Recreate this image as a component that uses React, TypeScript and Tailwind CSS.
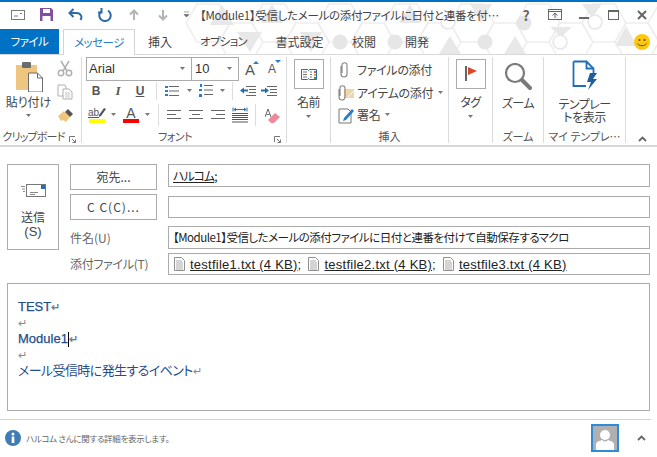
import type { ReactNode } from "react";

function Svg({ w, h, children, className = "" }: { w: number; h: number; children: ReactNode; className?: string }) {
  return (
    <svg width={w} height={h} viewBox={`0 0 ${w} ${h}`} className={`block shrink-0 ${className}`} fill="none">
      {children}
    </svg>
  );
}

function Caret({ className = "" }: { className?: string }) {
  return (
    <Svg w={7} h={4} className={className}>
      <path d="M1 0h5L3.500 3z" fill="#777" />
    </Svg>
  );
}

function TitlePattern() {
  const hexes = Array.from({ length: 15 }, (_, i) => {
    const cx = 208 + i * 33;
    const cy = i % 2 ? 40 : 21;
    return `M${cx - 22} ${cy}L${cx - 11} ${cy - 19}H${cx + 11}L${cx + 22} ${cy}L${cx + 11} ${cy + 19}H${cx - 11}Z`;
  });
  const tris = [
    "M222 3l12 20h-24z", "M237 30h25l-12 20z", "M272 2l11 19h-22z", "M300 30h22l-11 20z", "M410 2l11 19h-22z",
    "M470 2h22l-11 19z", "M550 25h22l-11 10z", "M582 2h20l-10 14z", "M626 24l11 20h-22z", "M515 34l11 18h-22z", "M450 34l11 18h-22z",
  ];
  const dots = [[340, 40], [485, 40], [524, 21], [395, 40]];
  const rings = [[560, 40], [595, 20], [448, 20]];
  return (
    <svg width={657} height={52} viewBox="0 0 657 52" className="absolute left-0 top-[2px]" fill="none">
      {hexes.map((d) => (
        <path key={d} d={d} stroke="#eeeeee" strokeWidth={1.5} />
      ))}
      {tris.map((d) => (
        <path key={d} d={d} fill="#e8e8e8" />
      ))}
      {dots.map(([x, y]) => (
        <circle key={x} cx={x} cy={y} r={7.500} fill="#e6e6e6" />
      ))}
      {rings.map(([x, y]) => (
        <circle key={x} cx={x} cy={y} r={7} fill="#fff" stroke="#e6e6e6" strokeWidth={1.5} />
      ))}
    </svg>
  );
}

function TitleBar() {
  return (
    <div className="relative flex h-[27px] items-center">
      <div className="flex w-[200px] items-center pb-[2px]">
        <Svg w={16} h={12} className="ml-[10px]">
          <rect x={1.500} y={1.500} width={13} height={9} stroke="#7a7a7a" />
          <path d="M4 7h4M10 4.500h2" stroke="#7a7a7a" />
        </Svg>
        <Svg w={15} h={15} className="ml-[13px]">
          <path d="M1 1h11l2 2v11H1z" fill="#80509e" />
          <rect x={4} y={2} width={7} height={4} fill="#fff" />
          <rect x={3.500} y={9} width={8} height={5} fill="#fff" />
        </Svg>
        <Svg w={15} h={13} className="ml-[14px]">
          <path d="M12.500 12c2-3 .5-7-4-7H2M5.500 1L1.500 5l4 4" stroke="#2b6ca8" strokeWidth={2} />
        </Svg>
        <Svg w={14} h={14} className="ml-[15px]">
          <path d="M4 2.500a5.700 5.700 0 1 0 6 0M3.500 0v4.500H0" stroke="#2b6ca8" strokeWidth={2} />
        </Svg>
        <Svg w={10} h={12} className="ml-[17px]">
          <path d="M5 11V2M1 5.500L5 1.500l4 4" stroke="#b4b4b4" strokeWidth={2} />
        </Svg>
        <Svg w={10} h={12} className="ml-[19px]">
          <path d="M5 1v9M1 6.500l4 4 4-4" stroke="#b4b4b4" strokeWidth={2} />
        </Svg>
        <Svg w={7} h={7} className="ml-[15px]">
          <path d="M1 1h5M1 3.500h5L3.500 6z" fill="#666" stroke="#666" strokeWidth={0.6} />
        </Svg>
      </div>
      <span className="relative w-[320px] whitespace-nowrap text-[11.5px] leading-none tracking-[-0.3px] text-[#444]">
        【Module1】受信したメールの添付ファイルに日付と連番を付…
      </span>
      <div className="relative flex items-center pb-[2px]">
        <span className="w-[12px] text-center text-[14px] font-bold leading-none text-[#666]">?</span>
        <Svg w={14} h={11} className="ml-[16px]">
          <rect x={0.500} y={0.500} width={13} height={10} stroke="#666" />
          <path d="M0 2.500h14M7 9V4.500M4.500 6.500L7 4l2.500 2.500" stroke="#666" />
        </Svg>
        <Svg w={10} h={2} className="ml-[17px] mt-[6px]">
          <rect width={10} height={2} fill="#666" />
        </Svg>
        <Svg w={11} h={10} className="ml-[19px]">
          <rect x={0.500} y={0.500} width={10} height={9} stroke="#666" />
          <rect width={11} height={2} fill="#666" />
        </Svg>
        <Svg w={10} h={10} className="ml-[18px]">
          <path d="M1 1l8 8M9 1l-8 8" stroke="#666" strokeWidth={2} />
        </Svg>
      </div>
    </div>
  );
}

function Tabs() {
  const tabs = [
    { label: "挿入", w: "w-[50px]", type: "text-[12px]" },
    { label: "オプション", w: "w-[77px]", type: "text-[11.5px] tracking-[-0.7px]" },
    { label: "書式設定", w: "w-[75px]", type: "text-[12px]" },
    { label: "校閲", w: "w-[54px]", type: "text-[12px]" },
    { label: "開発", w: "w-[52px]", type: "text-[12px]" },
  ];
  return (
    <div className="relative flex h-[25px] items-stretch">
      <div className="flex w-[59px] items-center justify-center bg-[#0072c6] text-[11.5px] tracking-[-0.5px] text-white">ファイル</div>
      <div className="relative z-10 -mb-px ml-[4px] flex w-[72px] items-center justify-center border border-b-0 border-[#d4d4d4] bg-white text-[11.5px] tracking-[-0.5px] text-[#2b7cc4]">
        メッセージ
      </div>
      {tabs.map((t) => (
        <div key={t.label} className={`flex ${t.w} ${t.type} items-center justify-center text-[#444]`}>
          {t.label}
        </div>
      ))}
      <div className="ml-auto mr-[7px] flex items-center">
        <Svg w={16} h={16}>
          <circle cx={8} cy={8} r={8} fill="#fcc70f" />
          <circle cx={5.500} cy={6} r={1} fill="#5a4a10" />
          <circle cx={10.500} cy={6} r={1} fill="#5a4a10" />
          <path d="M3.500 9.500c1.500 3 7.500 3 9 0" stroke="#5a4a10" />
        </Svg>
      </div>
    </div>
  );
}

function Group({ w, label, children, launcher, labelClass = "" }: { w: string; label?: string; children: ReactNode; launcher?: boolean; labelClass?: string }) {
  return (
    <div className={`my-[2px] flex ${w} shrink-0 flex-col border-r border-[#dcdcdc]`}>
      <div className="h-[75px]">{children}</div>
      <div className={`relative flex h-[14px] items-center justify-center whitespace-nowrap text-[11px] leading-none text-[#555] ${labelClass}`}>
        {label}
        {launcher && (
          <Svg w={7} h={7} className="absolute bottom-0 right-[5px]">
            <path d="M.5 6V.5H6M3 3l3.500 3.500M6.500 3.500v3h-3" stroke="#777" />
          </Svg>
        )}
      </div>
    </div>
  );
}

function VSep({ h = "h-[18px]", mx = "mx-[6px]" }: { h?: string; mx?: string }) {
  return <div className={`${h} ${mx} w-px shrink-0 bg-[#dcdcdc]`} />;
}

function Clipboard() {
  return (
    <Group w="w-[82px]" label="クリップボード" launcher labelClass="pr-[14px] tracking-[-0.8px]">
      <div className="flex">
        <div className="flex w-[57px] flex-col items-center pt-[5px]">
          <Svg w={30} h={30}>
            <path d="M2 3h21v25H2z" fill="#eec67f" />
            <rect x={8} y={0} width={9} height={6} rx={1} fill="#6c6c6c" />
            <path d="M14.500 11h9l5 5v14h-14z" fill="#fff" stroke="#6c6c6c" />
            <path d="M23.500 11v5h5" stroke="#6c6c6c" />
          </Svg>
          <span className="mt-[3px] whitespace-nowrap text-[12px] leading-[14px] text-[#444]">貼り付け</span>
          <Caret className="mt-[5px]" />
        </div>
        <div className="flex flex-col gap-[7px] pt-[3px]">
          <Svg w={16} h={17}>
            <path d="M4 1l6 10M12 1L6 11" stroke="#b0b0b0" strokeWidth={1.500} />
            <circle cx={4} cy={13} r={2.700} stroke="#b0b0b0" strokeWidth={1.500} />
            <circle cx={12} cy={13} r={2.700} stroke="#b0b0b0" strokeWidth={1.500} />
          </Svg>
          <Svg w={16} h={16}>
            <path d="M1 1h7l1 2v9H1z" fill="#fff" stroke="#b0b0b0" />
            <path d="M6 5h6l3 3v7H6z" fill="#fff" stroke="#b0b0b0" />
            <path d="M8 9h5M8 11h5M8 13h5" stroke="#c4c4c4" />
          </Svg>
          <Svg w={17} h={16}>
            <path d="M1 9l6-5 6 6-4 5-3-2-2 1z" fill="#eec67f" />
            <path d="M8 5l5 5 3-3-5-5z" fill="#555" />
          </Svg>
        </div>
      </div>
    </Group>
  );
}

function IconRow({ children, className = "" }: { children: ReactNode; className?: string }) {
  return <div className={`flex items-center ${className}`}>{children}</div>;
}

function Font() {
  return (
    <Group w="w-[205px]" label="フォント" launcher labelClass="pr-[18px] tracking-[-0.5px]">
      <div className="flex flex-col pl-[4px] pt-0">
        <IconRow>
          <div className="flex h-[24px] w-[106px] items-center justify-between border border-[#ababab] pl-[2px] pr-[5px] font-['Liberation_Sans'] text-[13px] text-[#333]">
            Arial
            <Caret />
          </div>
          <div className="-ml-px flex h-[24px] w-[48px] items-center justify-between border border-[#ababab] pl-[3px] pr-[5px] font-['Liberation_Sans'] text-[13px] text-[#333]">
            10
            <Caret />
          </div>
          <span className="relative ml-px w-[20px] text-center font-['Liberation_Sans'] text-[15px] leading-none text-[#555]">
            A
            <Svg w={6} h={3} className="absolute right-[1px] top-[-1px]">
              <path d="M0 3l3-3 3 3z" fill="#2b7cc4" />
            </Svg>
          </span>
          <span className="relative w-[24px] text-center font-['Liberation_Sans'] text-[12px] leading-none text-[#555]">
            A
            <Svg w={6} h={3} className="absolute right-[3px] top-[-3px]">
              <path d="M0 0l3 3 3-3z" fill="#2b7cc4" />
            </Svg>
          </span>
        </IconRow>
        <IconRow className="h-[19px]">
          <span className="w-[20px] text-center font-['Liberation_Sans'] text-[12px] font-bold text-[#555]">B</span>
          <span className="w-[24px] text-center font-['Liberation_Serif'] text-[13px] font-bold italic text-[#555]">I</span>
          <span className="w-[20px] text-center font-['Liberation_Sans'] text-[12px] font-bold text-[#555] underline">U</span>
          <VSep h="h-[18px]" mx="ml-[6px] mr-[8px]" />
          <Svg w={14} h={12}>
            <path d="M4 1.500h10M4 6h10M4 10.500h10" stroke="#666" />
            <path d="M0 1h3v2H0zM0 5h3v2H0zM0 9h3v2H0z" fill="#2b7cc4" />
          </Svg>
          <Caret className="ml-[7px]" />
          <Svg w={14} h={13} className="ml-[6px]">
            <path d="M5 1.500h9M5 6h9M5 10.500h9" stroke="#666" />
            <path d="M1 0h2v3H1zM0 5h3v2H0zM0 10h3v3H0z" fill="#2b7cc4" />
          </Svg>
          <Caret className="ml-[6px]" />
          <VSep h="h-[18px]" mx="ml-[6px] mr-[7px]" />
          <Svg w={16} h={11}>
            <path d="M6 1.500h10M9 4.500h7M9 7.500h7M6 10.500h10" stroke="#666" />
            <path d="M0 5.500l4-3v2h4v2H4v2z" fill="#2b6ca8" />
          </Svg>
          <Svg w={16} h={11} className="ml-[5px]">
            <path d="M6 1.500h10M9 4.500h7M9 7.500h7M6 10.500h10" stroke="#666" />
            <path d="M8 5.500l-4-3v2H0v2h4v2z" fill="#2b6ca8" />
          </Svg>
        </IconRow>
        <IconRow className="mt-[4px] h-[22px]">
          <div className="ml-[3px] flex w-[16px] flex-col items-center">
            <div className="flex h-[12px] items-center">
              <span className="font-['Liberation_Sans'] text-[10px] leading-none text-[#555] underline">ab</span>
              <Svg w={7} h={11} className="-mt-[2px]">
                <path d="M0 8l5-7 2 1-5 7-2 1z" fill="#555" />
              </Svg>
            </div>
            <div className="h-[4px] w-[16px] bg-[#ffff00]" />
          </div>
          <Caret className="ml-[5px]" />
          <div className="ml-[6px] flex w-[16px] flex-col items-center">
            <span className="font-['Liberation_Sans'] text-[14px] leading-[12px] text-[#555]">A</span>
            <div className="h-[4px] w-[16px] bg-[#ff0000]" />
          </div>
          <Caret className="ml-[5px]" />
          <VSep h="h-[22px]" mx="ml-[7px] mr-[8px]" />
          <Svg w={14} h={12}>
            <path d="M0 1.500h14M0 5.500h9M0 9.500h14" stroke="#666" />
          </Svg>
          <Svg w={14} h={12} className="ml-[8px]">
            <path d="M0 1.500h14M3 5.500h8M0 9.500h14" stroke="#666" />
          </Svg>
          <Svg w={14} h={12} className="ml-[8px]">
            <path d="M0 1.500h14M5 5.500h9M0 9.500h14" stroke="#666" />
          </Svg>
          <Svg w={16} h={16} className="ml-[7px]">
            <path d="M1 .5v4M15 .5v4M2 2.500h12M4 1L2 2.500 4 4M12 1l2 1.500L12 4" stroke="#2b6ca8" />
            <path d="M0 6.500h16M0 8.500h16M0 10.500h16M0 12.500h16M0 15h16" stroke="#555" />
          </Svg>
          <VSep h="h-[22px]" mx="ml-[7px] mr-[9px]" />
          <Svg w={16} h={15}>
            <path d="M0 9l3-8 3 8M1.500 6.500h3" stroke="#666" />
            <path d="M3 12l7-7 5 4-6 6H6z" fill="#ee8a98" />
          </Svg>
        </IconRow>
      </div>
    </Group>
  );
}

function BigLabel({ children }: { children: ReactNode }) {
  return <span className="block whitespace-nowrap text-[12px] leading-[13px] tracking-[-0.5px] text-[#444]">{children}</span>;
}

function Names() {
  return (
    <Group w="w-[44px]">
      <div className="flex flex-col items-center pt-[2px]">
        <div className="flex h-[30px] w-[30px] items-center justify-center border border-[#ababab]">
          <Svg w={16} h={12}>
            <path d="M.5 1.500h6l1 1 1-1h7v10h-7l-1-1-1 1h-6z" stroke="#2b6ca8" />
            <path d="M2 4h4M2 6.500h4M2 9h4M9 4h2M9 6.500h2M9 9h2" stroke="#777" />
            <path d="M13 3h2v2h-2z" fill="#d9573a" />
            <path d="M13 6h2v2h-2z" fill="#e0a83a" />
            <path d="M13 9h2v2h-2z" fill="#4a8f3c" />
          </Svg>
        </div>
        <div className="mt-[6px]">
          <BigLabel>名前</BigLabel>
        </div>
        <Caret className="mt-[7px]" />
      </div>
    </Group>
  );
}

function Insert() {
  return (
    <Group w="w-[118px]" label="挿入">
      <div className="flex flex-col whitespace-nowrap pl-[7px] pt-[1px] text-[12px] leading-none tracking-[-0.3px] text-[#444]">
        <IconRow className="h-[24px]">
          <Svg w={17} h={17}>
            <path d="M3 4v8c0 4 6 4 6 0V3c0-3-5-3-5 0v8" stroke="#8a8a8a" strokeWidth={1.200} />
          </Svg>
          <span className="ml-[2px]">ファイルの添付</span>
        </IconRow>
        <IconRow className="h-[22px]">
          <Svg w={17} h={17}>
            <path d="M6 4h10v9H6z" fill="#f0d6a6" />
            <path d="M10 12l6-6" stroke="#fff" />
            <path d="M1 4v8c0 4 6 4 6 0V3c0-3-5-3-5 0v8" stroke="#8a8a8a" strokeWidth={1.200} />
          </Svg>
          <span className="ml-[2px]">アイテムの添付</span>
          <Caret className="ml-[4px]" />
        </IconRow>
        <IconRow className="h-[22px]">
          <Svg w={17} h={17}>
            <path d="M1 2h9l3 3v11H1z" stroke="#777" />
            <path d="M6 11l8-9 2 2-8 9-3 1z" fill="#2b7cc4" />
          </Svg>
          <span className="ml-[2px]">署名</span>
          <Caret className="ml-[4px]" />
        </IconRow>
      </div>
    </Group>
  );
}

function Tags() {
  return (
    <Group w="w-[44px]">
      <div className="flex flex-col items-center pt-[2px]">
        <div className="flex h-[30px] w-[30px] items-center justify-center border border-[#ababab]">
          <Svg w={14} h={16}>
            <rect x={1} y={0} width={2} height={15} fill="#666" />
            <path d="M4 1l9 4-9 4z" fill="#d9482b" />
          </Svg>
        </div>
        <div className="mt-[6px]">
          <BigLabel>タグ</BigLabel>
        </div>
        <Caret className="mt-[7px]" />
      </div>
    </Group>
  );
}

function Zoom() {
  return (
    <Group w="w-[51px]" label="ズーム">
      <div className="flex flex-col items-center pt-[6px]">
        <Svg w={28} h={27}>
          <circle cx={11} cy={10} r={9} stroke="#7a7a7a" strokeWidth={2.200} />
          <path d="M18 17l8 8" stroke="#7a7a7a" strokeWidth={4} strokeLinecap="round" />
        </Svg>
        <div className="mt-[6px]">
          <BigLabel>ズーム</BigLabel>
        </div>
      </div>
    </Group>
  );
}

function Template() {
  return (
    <Group w="w-[82px]" label="マイ テンプレ…">
      <div className="flex flex-col items-center pt-[3px] text-center">
        <Svg w={26} h={32}>
          <path d="M1.500 1.500h13l7 7V14M1.500 1.500V26H14" stroke="#1e6fb8" strokeWidth={1.800} />
          <path d="M14.500 1.500v7h7" stroke="#1e6fb8" strokeWidth={1.800} />
          <path d="M18 13h7l-4 6h4l-9 11 3-8h-4z" fill="#1e5f9e" />
        </Svg>
        <div className="mt-[5px] flex flex-col">
          <BigLabel>テンプレー</BigLabel>
          <BigLabel>トを表示</BigLabel>
        </div>
      </div>
    </Group>
  );
}

function Ribbon() {
  return (
    <div className="relative flex h-[93px] border-b-2 border-t border-[#d8d8d8]">
      <Clipboard />
      <Font />
      <Names />
      <Insert />
      <Tags />
      <Zoom />
      <Template />
      <div className="ml-auto mr-[10px] flex items-end pb-[3px]">
        <Svg w={9} h={6}>
          <path d="M1 5l3.500-3.500L8 5" stroke="#666" strokeWidth={1.800} />
        </Svg>
      </div>
    </div>
  );
}

function Field({ children, h = "h-[22px]" }: { children?: ReactNode; h?: string }) {
  return (
    <div className={`flex ${h} min-w-0 flex-1 items-center border border-[#ababab] px-[4px] text-[12px] leading-none text-[#222]`}>
      {children}
    </div>
  );
}

function FormButton({ children }: { children: ReactNode }) {
  return (
    <button className="flex h-[26px] w-[87px] shrink-0 items-center justify-center border border-[#ababab] text-[12px] text-[#444]">
      {children}
    </button>
  );
}

function FileChip({ name, last }: { name: string; last?: boolean }) {
  return (
    <span className="flex items-center">
      <Svg w={11} h={14} className="mr-[5px]">
        <path d="M.5.5h7l3 3v10H.5z" stroke="#909090" fill="#fff" />
        <path d="M2 4h6M2 6h7M2 8h7M2 10h7M2 12h7" stroke="#aaa" />
      </Svg>
      <span className="underline">{name}</span>
      {!last && <span>;</span>}
    </span>
  );
}

function Form() {
  return (
    <div className="flex px-[7px] pt-[17px]">
      <button className="flex h-[86px] w-[52px] shrink-0 flex-col items-center border border-[#ababab] pt-[18px] text-[12px] leading-[15px] text-[#444]">
        <Svg w={27} h={14}>
          <rect x={6.500} y={1.500} width={19} height={12} stroke="#777" fill="#fff" />
          <rect x={21} y={2} width={4} height={4} fill="#2b6ca8" />
          <path d="M10 9.500h8M10 11.500h5M1 3.500h4M2 6h3M3 8.500h2" stroke="#888" />
        </Svg>
        <span className="mt-[12px]">送信</span>
        <span className="font-['Liberation_Sans'] text-[13px]">(S)</span>
      </button>
      <div className="ml-[11px] flex min-w-0 flex-1 flex-col">
        <div className="flex items-start">
          <FormButton>宛先...</FormButton>
          <div className="ml-[11px] flex min-w-0 flex-1">
            <Field h="h-[23px]">
              <span className="tracking-[-1px] underline">ハルコム</span>;
            </Field>
          </div>
        </div>
        <div className="mt-[4px] flex items-center">
          <FormButton>
            <span className="tracking-[1px]">C C(C)...</span>
          </FormButton>
          <div className="ml-[11px] flex min-w-0 flex-1">
            <Field />
          </div>
        </div>
        <div className="mt-[6px] flex items-center">
          <span className="w-[98px] shrink-0 text-[12px] leading-none text-[#666]">件名(U)</span>
          <Field h="h-[23px]">
            <span className="whitespace-nowrap text-[11.5px] tracking-[-0.5px]">【Module1】受信したメールの添付ファイルに日付と連番を付けて自動保存するマクロ</span>
          </Field>
        </div>
        <div className="mt-[4px] flex items-center">
          <span className="w-[98px] shrink-0 text-[12px] leading-none tracking-[-0.3px] text-[#666]">添付ファイル(T)</span>
          <Field>
            <span className="ml-px flex items-center gap-[7px] whitespace-nowrap font-['Liberation_Sans'] text-[13px] tracking-[0.25px]">
              <FileChip name="testfile1.txt (4 KB)" />
              <FileChip name="testfile2.txt (4 KB)" />
              <FileChip name="testfile3.txt (4 KB)" last />
            </span>
          </Field>
        </div>
      </div>
    </div>
  );
}

function Para() {
  return <span className="text-[11px] leading-none text-[#888]">↵</span>;
}

function Body() {
  return (
    <div className="mx-[7px] mt-[8px] flex h-[128px] flex-col border border-[#ababab] pl-[10px] pt-[15px] font-['Liberation_Sans','Noto_Sans_CJK_JP',sans-serif] text-[13px] leading-[16px] text-[#1f4e8c]">
      <div className="[-webkit-text-stroke:0.25px_#1f4e8c]">
        TEST
        <Para />
      </div>
      <div>
        <Para />
      </div>
      <div className="flex items-center [-webkit-text-stroke:0.25px_#1f4e8c]">
        Module1
        <span className="h-[15px] w-px bg-black" />
        <Para />
      </div>
      <div>
        <Para />
      </div>
      <div className="tracking-[-0.6px]">
        メール受信時に発生するイベント
        <Para />
      </div>
    </div>
  );
}

function Footer() {
  return (
    <div className="mr-[6px] mt-[8px] flex h-[37px] items-center border-t border-[#d4d4d4] pl-[5px] pr-[5px]">
      <Svg w={16} h={16}>
        <circle cx={8} cy={8} r={8} fill="#3f7cb5" />
        <circle cx={8} cy={4} r={1.500} fill="#fff" />
        <rect x={6.700} y={6.500} width={2.600} height={6.500} fill="#fff" />
      </Svg>
      <span className="ml-[5px] text-[8.5px] leading-none tracking-[-0.3px] text-[#666]">ハルコム さんに関する詳細を表示します。</span>
      <div className="ml-auto flex h-[28px] w-[28px] items-end justify-center border-2 border-[#2e8bd8] bg-[#b0b0b0]">
        <Svg w={20} h={22}>
          <circle cx={10} cy={7} r={5} fill="#fff" />
          <path d="M1 22v-6c1-3 4-3 6-4 3 2 4 2 6 0 2 1 5 1 6 4v6z" fill="#fff" />
        </Svg>
      </div>
      <Svg w={9} h={6} className="ml-[18px]">
        <path d="M1 5l3.500-3.500L8 5" stroke="#666" strokeWidth={1.800} />
      </Svg>
    </div>
  );
}

export default function App() {
  return (
    <div className="relative h-[457px] w-[657px] overflow-hidden bg-white font-['Noto_Sans_CJK_JP',sans-serif] [font-feature-settings:'palt']">
      <TitlePattern />
      <div className="relative h-[2px] bg-[#0072c6]" />
      <TitleBar />
      <Tabs />
      <Ribbon />
      <Form />
      <Body />
      <Footer />
    </div>
  );
}
